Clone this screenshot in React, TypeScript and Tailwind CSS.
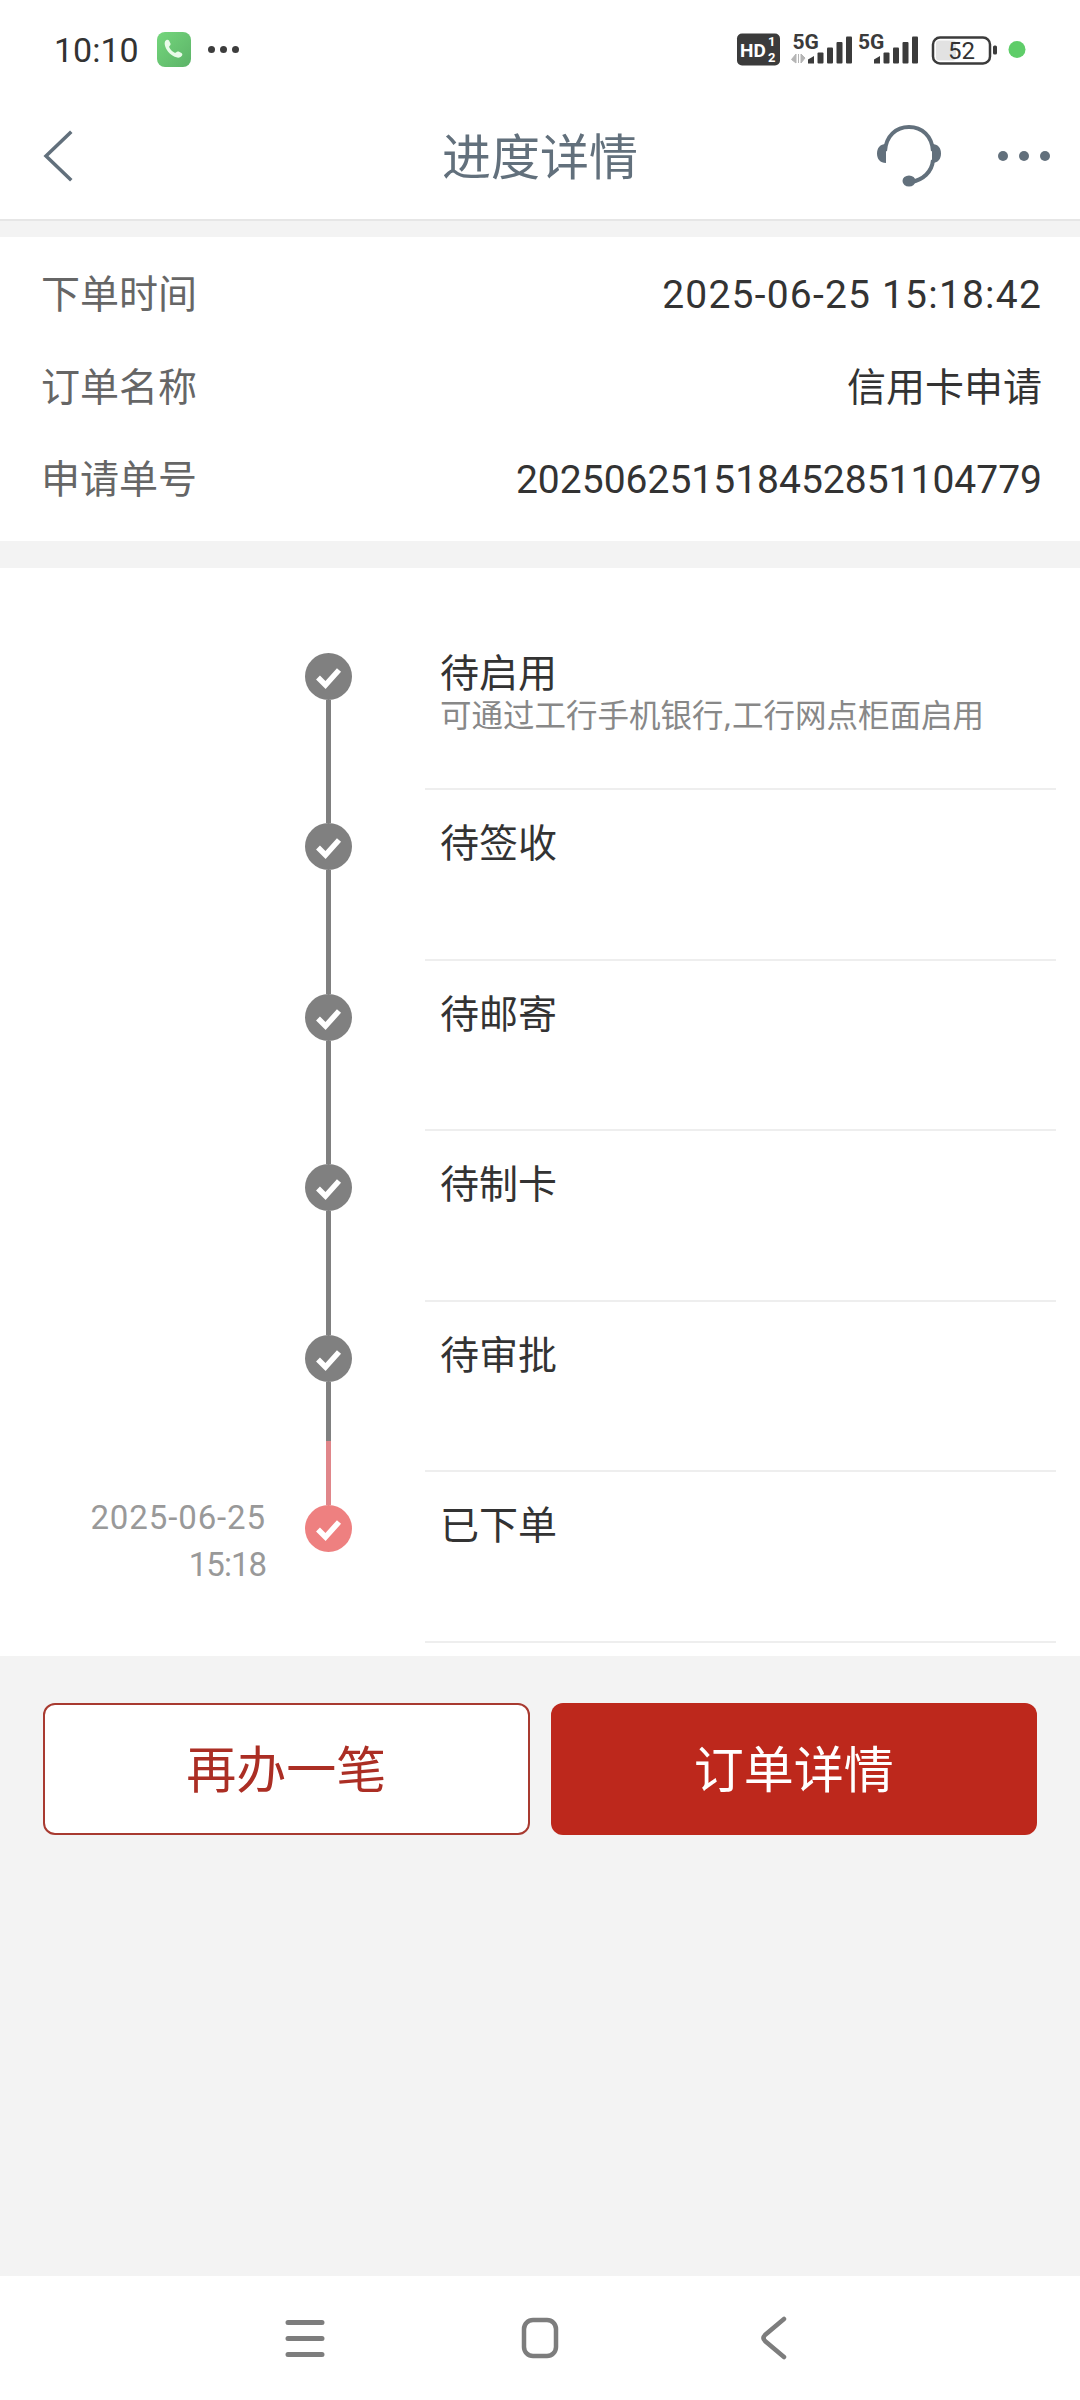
import { FC } from "react";

const CJK = "font-['Noto_Sans','Noto_Sans_CJK_SC',sans-serif]";
const NUM = "font-['Roboto','Noto_Sans_CJK_SC',sans-serif]";

const infoRows = [
  { label: "下单时间", value: "2025-06-25 15:18:42", tracking: "tracking-[1.2px]" },
  { label: "订单名称", value: "信用卡申请", tracking: "" },
  { label: "申请单号", value: "202506251518452851104779", tracking: "" },
];

interface Step {
  title: string;
  desc?: string;
  date?: string;
  time?: string;
}

const steps: Step[] = [
  { title: "待启用", desc: "可通过工行手机银行,工行网点柜面启用" },
  { title: "待签收" },
  { title: "待邮寄" },
  { title: "待制卡" },
  { title: "待审批" },
  { title: "已下单", date: "2025-06-25", time: "15:18" },
];

const CheckDot: FC<{ color: string }> = ({ color }) => (
  <svg width="47" height="47" viewBox="0 0 47 47" className="shrink-0">
    <circle cx="23.5" cy="23.5" r="23.5" fill={color} />
    <path d="M13 24.500l7.500 7.500L34 17" fill="none" stroke="#fff" strokeWidth="5.500" />
  </svg>
);

// signal bars, x is the left edge of the first bar
const SignalBars: FC<{ x: number }> = ({ x }) => (
  <g fill="#3b3b3b">
    <path d={`M${x} 31.500v-4l6-3.500v7.500z`} />
    <rect x={x + 9.5} y="20.500" width="6" height="11" rx="1" />
    <rect x={x + 19} y="15.500" width="6" height="16" rx="1" />
    <rect x={x + 28.5} y="10" width="6" height="21.500" rx="1" />
    <rect x={x + 38} y="4.500" width="6" height="27" rx="1" />
  </g>
);

const StatusBar: FC = () => (
  <div className="h-[93px] flex items-center justify-between pl-[54px] pr-[52px] pt-[6px] bg-white">
    <div className="flex items-center">
      <span className="font-['Roboto',sans-serif] text-[34px] leading-none text-[#333] w-[103px]">10:10</span>
      <svg width="34" height="35" viewBox="0 0 34 35">
        <defs>
          <linearGradient id="phoneBg" x1="0" y1="0" x2="1" y2="1">
            <stop offset="0" stopColor="#74d67c" />
            <stop offset="1" stopColor="#5cb368" />
          </linearGradient>
        </defs>
        <rect width="34" height="35" rx="8" fill="url(#phoneBg)" />
        <path
          d="M8 9.500c1-2 3-2.500 4-1l1.500 3c.4 1-.2 1.800-1 2.500-.5.5-.4 1 0 1.800 1.200 2.200 2.500 3.500 4.700 4.700.8.400 1.300.4 1.800 0 .8-.8 1.600-1.400 2.600-.9l2.900 1.500c1.500 1 1 3-1 4-2.500 1.300-6 .3-9.500-2.500C10 19.500 6.500 13 8 9.500z"
          fill="#e9fbe9"
        />
      </svg>
      <div className="flex gap-[5px] ml-[17px]">
        <span className="w-[7px] h-[7px] rounded-full bg-[#3d3d3d]" />
        <span className="w-[7px] h-[7px] rounded-full bg-[#3d3d3d]" />
        <span className="w-[7px] h-[7px] rounded-full bg-[#3d3d3d]" />
      </div>
    </div>
    <svg width="292" height="46" viewBox="0 -5 292 46">
      <rect x="1" y="1.500" width="43" height="32" rx="5" fill="#3b3b3b" />
      <text x="4" y="24.500" fontFamily="Roboto, sans-serif" fontWeight="700" fontSize="19" fill="#fff">HD</text>
      <text x="32" y="14" fontFamily="Roboto, sans-serif" fontWeight="700" fontSize="13" fill="#fff">1</text>
      <text x="32" y="30" fontFamily="Roboto, sans-serif" fontWeight="700" fontSize="13" fill="#fff">2</text>
      <text x="56.500" y="16.500" fontFamily="Roboto, sans-serif" fontWeight="700" fontSize="21" fill="#3b3b3b">5G</text>
      <path d="M60 22v9l-4.500-3.500zM62.500 22v9M65 22v9l4-5z" fill="#b5b5b5" stroke="#b5b5b5" strokeWidth="1" />
      <SignalBars x={72} />
      <text x="122" y="16.500" fontFamily="Roboto, sans-serif" fontWeight="700" fontSize="21" fill="#3b3b3b">5G</text>
      <SignalBars x={138} />
      <rect x="197" y="5.500" width="57" height="26" rx="7" fill="#fff" stroke="#3b3b3b" strokeWidth="2.500" />
      <rect x="200" y="8.500" width="20" height="20" rx="3" fill="#e2e2e2" />
      <text x="225.500" y="27" textAnchor="middle" fontFamily="Roboto, sans-serif" fontSize="24" fill="#333">52</text>
      <rect x="257" y="13.500" width="4" height="9" rx="1.500" fill="#3b3b3b" />
      <circle cx="281" cy="17.500" r="8.500" fill="#5fcd69" />
    </svg>
  </div>
);

const NavBar: FC = () => (
  <div className="h-[126px] grid grid-cols-3 items-center bg-white border-b-2 border-[#e6e6e6] box-content">
    <div className="pl-[43px] flex">
      <svg width="30" height="52" viewBox="0 0 30 52">
        <path d="M27 3L3 26l24 23" fill="none" stroke="#62707c" strokeWidth="3.500" strokeLinecap="square" />
      </svg>
    </div>
    <div className={`${CJK} pt-[1px] text-center text-[49px] leading-none text-[#62707c]`}>进度详情</div>
    <div className="flex items-center justify-end pr-[30px]">
      <svg width="66" height="64" viewBox="0 0 66 64" className="mr-[56px]">
        <path d="M9 27C10 12 20 3 33 3s23 9 24 24" fill="none" stroke="#62707c" strokeWidth="4" />
        <path d="M57 36c-1 12-10 20-22 22" fill="none" stroke="#62707c" strokeWidth="4" />
        <path d="M10 20v19c-6 0-9-4-9-9.500S4 20 10 20zM56 20v19c6 0 9-4 9-9.500S62 20 56 20z" fill="#62707c" />
        <ellipse cx="33" cy="57" rx="6.500" ry="5.500" fill="#62707c" />
      </svg>
      <div className="flex gap-[11px]">
        <span className="w-[10px] h-[10px] rounded-full bg-[#62707c]" />
        <span className="w-[10px] h-[10px] rounded-full bg-[#62707c]" />
        <span className="w-[10px] h-[10px] rounded-full bg-[#62707c]" />
      </div>
    </div>
  </div>
);

const Timeline: FC = () => (
  <div className="bg-white pt-[52px] pb-[13px] mt-[27px]">
    {steps.map((step, i) => {
      const isLast = i === steps.length - 1;
      return (
        <div key={step.title} className="flex h-[170.6px]">
          <div className={`${NUM} w-[266px] shrink-0 pt-[22px] text-right text-[33px] leading-[47px] text-[#999]`}>
            {step.date && <div className="tracking-[0.9px]">{step.date}</div>}
            {step.time && <div className="tracking-[-1px]">{step.time}</div>}
          </div>
          <div className="w-[47px] ml-[38.500px] shrink-0 flex flex-col items-center">
            <div className={`h-[33px] w-[5px] ${i === 0 ? "" : isLast ? "bg-[#e0868a]" : "bg-[#808080]"}`} />
            <CheckDot color={isLast ? "#ee8080" : "#808080"} />
            {!isLast && <div className="flex-1 w-[5px] bg-[#808080]" />}
            {i === steps.length - 2 && <div className="h-[31px] w-[5px] bg-[#e0868a]" />}
          </div>
          <div className="ml-[73.500px] w-[631px] border-b-2 border-[#eeeeee] pl-[15px] pt-[27px]">
            <div className={`${CJK} text-[39px] leading-[50px] text-[#333]`}>{step.title}</div>
            {step.desc && <div className={`${CJK} text-[31.500px] leading-[36px] text-[#888]`}>{step.desc}</div>}
          </div>
        </div>
      );
    })}
  </div>
);

const App: FC = () => {
  return (
    <div className="w-[1080px] h-[2400px] flex flex-col bg-[#f3f3f3]">
      <StatusBar />
      <NavBar />
      <div className="flex-1">
        <div className="bg-white mt-[16px] pl-[41px] pr-[38px] pt-[12px] pb-[14px]">
          {infoRows.map((row) => (
            <div key={row.label} className={`${NUM} h-[92.500px] flex items-center justify-between text-[39px]`}>
              <span className="text-[#666]">{row.label}</span>
              <span className={`text-[#333] ${row.tracking}`}>{row.value}</span>
            </div>
          ))}
        </div>
        <Timeline />
        <div className="flex gap-[21px] px-[43px] pt-[47px]">
          <button className={`${CJK} w-[488px] h-[132px] rounded-[12px] border-2 border-[#a83a30] bg-white text-[50px] text-[#ab2e24]`}>
            再办一笔
          </button>
          <button className={`${CJK} w-[488px] h-[132px] rounded-[12px] bg-[#bd281c] text-[50px] text-white`}>
            订单详情
          </button>
        </div>
      </div>
      <div className="h-[124px] bg-white flex items-start pt-[43px] pl-[285px]">
        <svg width="40" height="39" viewBox="0 0 40 39">
          <path d="M3 3.500h34M3 19.500h34M3 35.500h34" stroke="#7d7d7d" strokeWidth="5" strokeLinecap="round" />
        </svg>
        <svg width="38" height="42" viewBox="0 0 38 42" className="ml-[196px] -mt-[2px]">
          <rect x="3" y="3" width="32" height="36" rx="9" fill="none" stroke="#7d7d7d" strokeWidth="4.500" />
        </svg>
        <svg width="28" height="44" viewBox="0 0 28 44" className="ml-[201px] -mt-[3px]">
          <path d="M24 3L5 19c-2 2-2 4 0 6l19 16" fill="none" stroke="#7d7d7d" strokeWidth="4.500" strokeLinecap="round" />
        </svg>
      </div>
    </div>
  );
};

export default App;
